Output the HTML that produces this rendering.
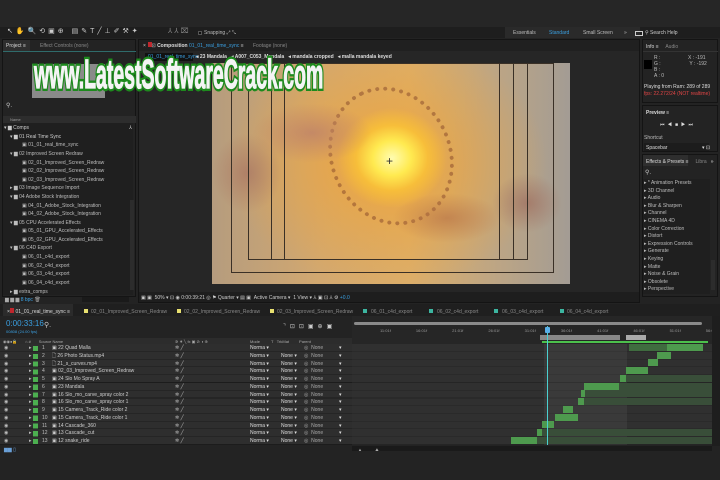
<!DOCTYPE html>
<html><head><meta charset="utf-8">
<style>
*{margin:0;padding:0;box-sizing:border-box}
body{width:720px;height:480px;background:#232323;overflow:hidden;position:relative;font-family:"Liberation Sans",sans-serif;color:#bdbdbd;font-size:5px}
.a{position:absolute}
.t{position:absolute;white-space:nowrap;font-size:5px;line-height:6px}
.panel{position:absolute;background:#232323;border:1px solid #141414}
.wm{position:absolute;left:34px;top:51px;font-size:41px;line-height:46px;font-weight:bold;white-space:nowrap;transform:scaleX(0.475);transform-origin:0 0;font-family:"Liberation Sans",sans-serif}
</style></head><body>
<div class="a" style="left:0;top:0;width:720px;height:27px;background:#262626"></div>
<div class="a" style="left:0;top:27px;width:720px;height:11px;background:#1e1e1e"></div>
<div class="t" style="left:7px;top:29px;color:#ccc;font-size:7px;letter-spacing:3px">↖✋🔍⟲▣⊕ ▤✎T╱⊥✐⚒✦</div>
<div class="t" style="left:168px;top:29px;color:#888;font-size:7px;letter-spacing:2px">⅄⅄⌧</div>
<div class="a" style="left:198px;top:31px;width:4px;height:4px;background:#111;border:1px solid #555"></div>
<div class="t" style="left:204px;top:30px;color:#bbb">Snapping ⤢ ⤡</div>
<div class="a" style="left:505px;top:27px;width:135px;height:11px;background:#2a2a2a"></div>
<div class="t" style="left:513px;top:30px">Essentials</div>
<div class="t" style="left:549px;top:30px;color:#3a9fe0">Standard</div>
<div class="t" style="left:583px;top:30px">Small Screen</div>
<div class="t" style="left:624px;top:30px">»</div>
<div class="a" style="left:635px;top:31px;width:8px;height:5px;border:1px solid #ccc"></div>
<div class="t" style="left:645px;top:30px;color:#ccc">⚲ Search Help</div>

<div class="panel" style="left:2px;top:39px;width:134px;height:258px"></div>
<div class="a" style="left:3px;top:40px;width:27px;height:11px;background:#2e2e2e"></div>
<div class="t" style="left:6px;top:43px;color:#ddd">Project ≡</div>
<div class="t" style="left:40px;top:43px;color:#888">Effect Controls (none)</div>
<div class="a" style="left:3px;top:51px;width:133px;height:1px;background:#2f6b6b"></div>
<div class="a" style="left:32px;top:64px;width:73px;height:34px;background:#8a8a8a"></div>
<div class="t" style="left:6px;top:103px;color:#ccc;font-size:6px">⚲.</div>
<div class="a" style="left:3px;top:116px;width:133px;height:7px;background:#2d2d2d"></div>
<div class="t" style="left:10px;top:117px;color:#999;font-size:4px">Name</div>
<div class="a" style="left:3px;top:123px;width:130px;height:172px;background:#1f1f1f"></div>
<div class="a" style="left:130px;top:200px;width:4px;height:90px;background:#2c2c2c"></div>
<div class="t" style="left:4px;top:125px;color:#ccc">▾ ▆ Comps</div>
<div class="t" style="left:129px;top:125px;color:#ccc">⅄</div>
<div class="t" style="left:10px;top:134px;color:#ccc">▾ ▆ 01 Real Time Sync</div>
<div class="t" style="left:22px;top:142px">▣ 01_01_real_time_sync</div>
<div class="t" style="left:10px;top:151px">▾ ▆ 02 Improved Screen Redraw</div>
<div class="t" style="left:22px;top:160px">▣ 02_01_Improved_Screen_Redraw</div>
<div class="t" style="left:22px;top:168px">▣ 02_02_Improved_Screen_Redraw</div>
<div class="t" style="left:22px;top:177px">▣ 02_03_Improved_Screen_Redraw</div>
<div class="t" style="left:10px;top:185px">▸ ▆ 03 Image Sequence Import</div>
<div class="t" style="left:10px;top:194px">▾ ▆ 04 Adobe Stock Integration</div>
<div class="t" style="left:22px;top:203px">▣ 04_01_Adobe_Stock_Integration</div>
<div class="t" style="left:22px;top:211px">▣ 04_02_Adobe_Stock_Integration</div>
<div class="t" style="left:10px;top:220px">▾ ▆ 05 CPU Accelerated Effects</div>
<div class="t" style="left:22px;top:228px">▣ 05_01_GPU_Accelerated_Effects</div>
<div class="t" style="left:22px;top:237px">▣ 05_02_GPU_Accelerated_Effects</div>
<div class="t" style="left:10px;top:245px">▾ ▆ 06 C4D Export</div>
<div class="t" style="left:22px;top:254px">▣ 06_01_c4d_export</div>
<div class="t" style="left:22px;top:263px">▣ 06_02_c4d_export</div>
<div class="t" style="left:22px;top:271px">▣ 06_03_c4d_export</div>
<div class="t" style="left:22px;top:280px">▣ 06_04_c4d_export</div>
<div class="t" style="left:10px;top:289px">▸ ▆ extra_comps</div>
<div class="t" style="left:5px;top:297px;color:#aaa">▆ ▆ ▆ <span style="color:#3a9fe0">8 bpc</span> 🗑</div>
<div class="a" style="left:82px;top:297px;width:47px;height:5px;background:#1a1a1a"></div>

<div class="panel" style="left:138px;top:39px;width:502px;height:264px;background:#262626"></div>
<div class="a" style="left:139px;top:40px;width:500px;height:11px;background:#202020"></div>
<div class="a" style="left:148px;top:42px;width:4px;height:5px;background:#c0272d"></div>
<div class="t" style="left:143px;top:43px;color:#ccc">×&nbsp;&nbsp;&nbsp; ⊡ <b style="color:#ddd">Composition</b> <span style="color:#3a9fe0">01_01_real_time_sync</span> ≡</div>
<div class="t" style="left:253px;top:43px;color:#888">Footage (none)</div>
<div class="a" style="left:145px;top:53px;width:48px;height:8px;background:#111"></div>
<div class="t" style="left:148px;top:54px;color:#3a9fe0">01_01_real_time_sync</div>
<div class="t" style="left:196px;top:54px;color:#ddd;font-weight:bold">◂ 23 Mandala&nbsp;&nbsp; ◂ A007_C053_Mandala&nbsp;&nbsp; ◂ mandala cropped&nbsp;&nbsp; ◂ malla mandala keyed</div>
<div class="a" style="left:212px;top:63px;width:358px;height:221px;overflow:hidden;background:radial-gradient(ellipse 55px 50px at 180px 95px,#fffcb0 0%,#ffea50 35%,#f7be3a 65%,rgba(240,175,70,0) 100%),radial-gradient(ellipse 160px 125px at 175px 100px,rgba(238,165,60,.95) 0%,rgba(225,170,95,0) 100%),linear-gradient(90deg,#b59c7e 0%,#d2a870 30%,#dcae6a 55%,#bca585 80%,#a39c94 100%);">
 <div class="a" style="left:118px;top:22px;width:122px;height:142px;border-radius:50%;border:4px dotted #6e2f1e;opacity:.4;transform:rotate(-25deg)"></div>
 <div class="a" style="left:40px;top:40px;width:120px;height:60px;background:radial-gradient(ellipse,rgba(190,130,105,.8) 0%,rgba(190,130,105,0) 70%)"></div>
 <div class="a" style="left:0;top:70px;width:70px;height:80px;background:radial-gradient(ellipse,rgba(170,120,100,.8) 0%,rgba(170,120,100,0) 70%)"></div>
 <div class="a" style="left:280px;top:110px;width:70px;height:60px;background:radial-gradient(ellipse,rgba(160,115,100,.8) 0%,rgba(160,115,100,0) 70%)"></div>
 <div class="a" style="left:180px;top:130px;width:110px;height:50px;background:radial-gradient(ellipse,rgba(180,110,70,.6) 0%,rgba(180,110,70,0) 70%)"></div>
 <div class="a" style="left:19px;top:0;width:323px;height:210px;border:1px solid #3a3026"></div>
 <div class="a" style="left:36px;top:0;width:280px;height:197px;border:1px solid #3a3026;border-top:0"></div>
 <div class="a" style="left:59px;top:0;width:1px;height:197px;background:#3a3026"></div>
 <div class="a" style="left:72px;top:0;width:1px;height:197px;background:#3a3026"></div>
 <div class="a" style="left:287px;top:0;width:1px;height:197px;background:#3a3026"></div>
 <div class="a" style="left:301px;top:0;width:1px;height:197px;background:#3a3026"></div>
 <div class="t" style="left:174px;top:92px;color:#333;font-size:12px;line-height:12px">+</div>
</div>
<div class="a" style="left:139px;top:292px;width:500px;height:10px;background:#1e1e1e"></div>
<div class="t" style="left:141px;top:295px;color:#ccc">▣ ▣ &nbsp;50% ▾ ⊡ ◉ 0:00:39:21 ◎ ⚑ Quarter ▾ ▤ ▣ &nbsp;Active Camera ▾ &nbsp;1 View ▾ ⅄ ▣ ⊡ ⅄ ⚙ <span style="color:#3a9fe0">+0.0</span></div>

<div class="panel" style="left:642px;top:39px;width:76px;height:64px"></div>
<div class="t" style="left:646px;top:44px;color:#ddd">Info ≡&nbsp;&nbsp;&nbsp;&nbsp; <span style="color:#888">Audio</span></div>
<div class="a" style="left:643px;top:51px;width:75px;height:1px;background:#333"></div>
<div class="a" style="left:644px;top:60px;width:8px;height:9px;background:#000"></div>
<div class="t" style="left:654px;top:55px;line-height:6px">R :<br>G :<br>B :<br>A : 0</div>
<div class="t" style="left:688px;top:55px;line-height:6px">X : -191<br>&nbsp;Y : -192</div>
<div class="t" style="left:644px;top:84px;color:#ddd">Playing from Ram: 289 of 289</div>
<div class="t" style="left:644px;top:91px;color:#e04545">fps: 22.272/24 (NOT realtime)</div>
<div class="panel" style="left:642px;top:105px;width:76px;height:47px"></div>
<div class="t" style="left:646px;top:110px;color:#ddd;font-weight:bold">Preview ≡</div>
<div class="t" style="left:660px;top:122px;color:#ddd;letter-spacing:3px;font-size:5px">⏮◀■▶⏭</div>
<div class="t" style="left:644px;top:135px">Shortcut</div>
<div class="a" style="left:644px;top:143px;width:65px;height:8px;background:#1c1c1c"></div>
<div class="t" style="left:646px;top:145px;color:#ddd">Spacebar</div>
<div class="t" style="left:702px;top:145px;color:#ddd">▾ ⊡</div>
<div class="panel" style="left:642px;top:154px;width:76px;height:143px"></div>
<div class="a" style="left:643px;top:155px;width:45px;height:11px;background:#2e2e2e"></div>
<div class="t" style="left:646px;top:159px;color:#ddd">Effects &amp; Presets ≡&nbsp;&nbsp;&nbsp;&nbsp; <span style="color:#888">Libra</span>&nbsp;&nbsp; »</div>
<div class="t" style="left:645px;top:170px;color:#ccc;font-size:6px">⚲.</div>
<div class="a" style="left:643px;top:179px;width:67px;height:115px;background:#1f1f1f"></div>
<div class="a" style="left:711px;top:260px;width:4px;height:30px;background:#2c2c2c"></div>
<div class="t" style="left:644px;top:180px;line-height:7.6px">▸ * Animation Presets<br>▸ 3D Channel<br>▸ Audio<br>▸ Blur &amp; Sharpen<br>▸ Channel<br>▸ CINEMA 4D<br>▸ Color Correction<br>▸ Distort<br>▸ Expression Controls<br>▸ Generate<br>▸ Keying<br>▸ Matte<br>▸ Noise &amp; Grain<br>▸ Obsolete<br>▸ Perspective</div>

<div class="a" style="left:0;top:304px;width:720px;height:12px;background:#1f1f1f"></div>
<div class="a" style="left:3px;top:304px;width:70px;height:12px;background:#2b2b2b"></div>
<div class="a" style="left:10px;top:308px;width:4px;height:5px;background:#c0272d"></div>
<div class="t" style="left:7px;top:309px;color:#ddd">×&nbsp;&nbsp;&nbsp; 01_01_real_time_sync ≡</div>
<div class="a" style="left:84px;top:309px;width:4px;height:4px;background:#e8e070"></div>
<div class="t" style="left:91px;top:309px;color:#888">02_01_Improved_Screen_Redraw</div>
<div class="a" style="left:177px;top:309px;width:4px;height:4px;background:#e8e070"></div>
<div class="t" style="left:184px;top:309px;color:#888">02_02_Improved_Screen_Redraw</div>
<div class="a" style="left:270px;top:309px;width:4px;height:4px;background:#e8e070"></div>
<div class="t" style="left:277px;top:309px;color:#888">02_03_Improved_Screen_Redraw</div>
<div class="a" style="left:363px;top:309px;width:4px;height:4px;background:#3cb5a0"></div>
<div class="t" style="left:371px;top:309px;color:#888">06_01_c4d_export</div>
<div class="a" style="left:429px;top:309px;width:4px;height:4px;background:#3cb5a0"></div>
<div class="t" style="left:437px;top:309px;color:#888">06_02_c4d_export</div>
<div class="a" style="left:494px;top:309px;width:4px;height:4px;background:#3cb5a0"></div>
<div class="t" style="left:502px;top:309px;color:#888">06_03_c4d_export</div>
<div class="a" style="left:560px;top:309px;width:4px;height:4px;background:#3cb5a0"></div>
<div class="t" style="left:567px;top:309px;color:#888">06_04_c4d_export</div>

<div class="a" style="left:0;top:316px;width:720px;height:130px;background:#232323"></div>
<div class="t" style="left:6px;top:320px;color:#3a9fe0;font-size:8px;line-height:8px">0:00:33:16</div>
<div class="t" style="left:6px;top:329px;color:#3a9fe0;font-size:4px">00808 (24.00 fps)</div>
<div class="t" style="left:44px;top:323px;color:#ccc;font-size:7px">⚲.</div>
<div class="t" style="left:283px;top:324px;color:#ccc;font-size:6px;letter-spacing:4px">⌝⊡⊡▣⊕▣</div>
<div class="a" style="left:0;top:338px;width:352px;height:7px;background:#2c2c2c"></div>
<div class="t" style="left:3px;top:339px;color:#aaa;font-size:4px">◉◉●🔒&nbsp;&nbsp;&nbsp;&nbsp;&nbsp;&nbsp;&nbsp;⌂ #&nbsp;&nbsp;&nbsp;&nbsp;&nbsp;&nbsp; Source Name</div>
<div class="t" style="left:175px;top:339px;color:#aaa;font-size:4px">✲ ✷ ╲ fx ▣ ⊘ ◑ ⊕</div>
<div class="t" style="left:250px;top:339px;color:#aaa;font-size:4px">Mode&nbsp;&nbsp;&nbsp;&nbsp;&nbsp;&nbsp;&nbsp;&nbsp;&nbsp; T&nbsp;&nbsp; TrkMat&nbsp;&nbsp;&nbsp;&nbsp;&nbsp;&nbsp;&nbsp;&nbsp; Parent</div>

<div class="a" style="left:0;top:344px;width:352px;height:101px;background:repeating-linear-gradient(#2e2e2e 0 7.2px,#1c1c1c 7.2px 7.75px)"></div>
<div class="t" style="left:0;top:345px;width:352px;line-height:7.75px">
<div style="position:relative">
<span class="a" style="left:4px;top:0">◉<br>◉<br>◉<br>◉<br>◉<br>◉<br>◉<br>◉<br>◉<br>◉<br>◉<br>◉<br>◉</span>
<span class="a" style="left:29px;top:0">▸<br>▸<br>▸<br>▸<br>▸<br>▸<br>▸<br>▸<br>▸<br>▸<br>▸<br>▸<br>▸</span>
<span class="a" style="left:42px;top:0">1<br>2<br>3<br>4<br>5<br>6<br>7<br>8<br>9<br>10<br>11<br>12<br>13</span>
<span class="a" style="left:52px;top:0;color:#ccc">▣ 22 Quad Malla<br>🗋 26 Photo Status.mp4<br>🗋 21_s_curves.mp4<br>▣ 02_03_Improved_Screen_Redraw<br>▣ 24 Slo Mo Spray A<br>▣ 23 Mandala<br>▣ 16 Slo_mo_carve_spray color 2<br>▣ 16 Slo_mo_carve_spray color 1<br>▣ 15 Camera_Track_Ride color 2<br>▣ 15 Camera_Track_Ride color 1<br>▣ 14 Cascade_360<br>▣ 13 Cascade_cut<br>▣ 12 snake_ride</span>
<span class="a" style="left:175px;top:0">✲ ╱<br>✲ ╱<br>✲ ╱<br>✲ ╱<br>✲ ╱<br>✲ ╱<br>✲ ╱<br>✲ ╱<br>✲ ╱<br>✲ ╱<br>✲ ╱<br>✲ ╱<br>✲ ╱</span>
<span class="a" style="left:250px;top:0;color:#ddd">Norma ▾<br>Norma ▾<br>Norma ▾<br>Norma ▾<br>Norma ▾<br>Norma ▾<br>Norma ▾<br>Norma ▾<br>Norma ▾<br>Norma ▾<br>Norma ▾<br>Norma ▾<br>Norma ▾</span>
<span class="a" style="left:281px;top:0;color:#ddd"><br>None ▾<br>None ▾<br>None ▾<br>None ▾<br>None ▾<br>None ▾<br>None ▾<br>None ▾<br>None ▾<br>None ▾<br>None ▾<br>None ▾</span>
<span class="a" style="left:304px;top:0;color:#aaa">◎ &nbsp;None<br>◎ &nbsp;None<br>◎ &nbsp;None<br>◎ &nbsp;None<br>◎ &nbsp;None<br>◎ &nbsp;None<br>◎ &nbsp;None<br>◎ &nbsp;None<br>◎ &nbsp;None<br>◎ &nbsp;None<br>◎ &nbsp;None<br>◎ &nbsp;None<br>◎ &nbsp;None</span>
<span class="a" style="left:339px;top:0;color:#ddd">▾<br>▾<br>▾<br>▾<br>▾<br>▾<br>▾<br>▾<br>▾<br>▾<br>▾<br>▾<br>▾</span>
</div></div>
<div class="a" style="left:33px;top:346px;width:5px;height:98px;background:repeating-linear-gradient(#4caf50 0 5px,transparent 5px 7.75px)"></div>
<div class="t" style="left:4px;top:447px;color:#6aa0d8;font-size:5px">▆▆ ▯</div>

<div class="a" style="left:352px;top:316px;width:360px;height:129px;background:#262626"></div>
<div class="a" style="left:354px;top:322px;width:348px;height:3px;background:#8a8a8a;border-radius:2px"></div>
<div class="t" style="left:380px;top:328px;color:#999;font-size:4px;word-spacing:24px">11:01f 16:01f 21:01f 26:01f 31:01f 36:01f 41:01f 46:01f 51:01f 56:01f</div>
<div class="a" style="left:540px;top:335px;width:80px;height:5px;background:#888"></div>
<div class="a" style="left:626px;top:335px;width:20px;height:5px;background:#aaa"></div>
<div class="a" style="left:542px;top:341px;width:166px;height:2px;background:#4cc04c"></div>
<div class="a" style="left:352px;top:344px;width:360px;height:101px;background:repeating-linear-gradient(#303030 0 7.2px,#252525 7.2px 7.75px)"></div>
<div class="a" style="left:544px;top:344px;width:83px;height:101px;background:rgba(255,255,255,.05)"></div>
<div class="a" style="left:629px;top:344px;width:74px;height:7px;background:#3f6b3f"></div>
<div class="a" style="left:667px;top:344px;width:36px;height:7px;background:#4e9a4e"></div>
<div class="a" style="left:657px;top:352px;width:14px;height:7px;background:#4e9a4e"></div>
<div class="a" style="left:648px;top:359px;width:10px;height:7px;background:#4e9a4e"></div>
<div class="a" style="left:626px;top:367px;width:22px;height:7px;background:#4e9a4e"></div>
<div class="a" style="left:620px;top:375px;width:6px;height:7px;background:#4e9a4e"></div>
<div class="a" style="left:626px;top:375px;width:86px;height:7px;background:#394e39"></div>
<div class="a" style="left:584px;top:383px;width:35px;height:7px;background:#4e9a4e"></div>
<div class="a" style="left:619px;top:383px;width:93px;height:7px;background:#394e39"></div>
<div class="a" style="left:581px;top:390px;width:4px;height:7px;background:#4e9a4e"></div>
<div class="a" style="left:585px;top:390px;width:127px;height:7px;background:#394e39"></div>
<div class="a" style="left:578px;top:398px;width:6px;height:7px;background:#4e9a4e"></div>
<div class="a" style="left:584px;top:398px;width:128px;height:7px;background:#394e39"></div>
<div class="a" style="left:563px;top:406px;width:10px;height:7px;background:#4e9a4e"></div>
<div class="a" style="left:555px;top:414px;width:23px;height:7px;background:#4e9a4e"></div>
<div class="a" style="left:542px;top:421px;width:12px;height:7px;background:#4e9a4e"></div>
<div class="a" style="left:537px;top:429px;width:5px;height:7px;background:#4e9a4e"></div>
<div class="a" style="left:542px;top:429px;width:170px;height:7px;background:#394e39"></div>
<div class="a" style="left:511px;top:437px;width:26px;height:7px;background:#4e9a4e"></div>
<div class="a" style="left:537px;top:437px;width:175px;height:7px;background:#394e39"></div>
<div class="a" style="left:547px;top:326px;width:1px;height:119px;background:#4ad0d0"></div>
<div class="a" style="left:545px;top:327px;width:5px;height:6px;background:#5ab0e8;border-radius:1px"></div>
<div class="a" style="left:352px;top:446px;width:360px;height:5px;background:#1a1a1a"></div>
<div class="t" style="left:358px;top:447px;color:#aaa;font-size:4px">▲&nbsp;&nbsp;&nbsp;&nbsp;&nbsp;&nbsp;&nbsp;&nbsp;&nbsp;&nbsp;&nbsp; ⛰</div>
<div class="a" style="left:712px;top:316px;width:8px;height:130px;background:#1e1e1e"></div>

<div class="wm" style="color:#1d8a1d;-webkit-text-stroke:6px #1d8a1d">www.LatestSoftwareCrack.com</div>
<div class="wm" style="color:#f4f4f4;-webkit-text-stroke:1.2px #f4f4f4">www.LatestSoftwareCrack.com</div>
</body></html>
